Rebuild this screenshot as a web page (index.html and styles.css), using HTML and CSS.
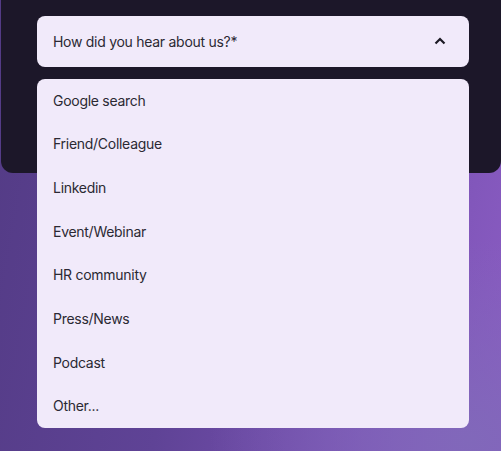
FILE: index.html
```html
<!DOCTYPE html>
<html>
<head>
<meta charset="utf-8">
<link rel="stylesheet" href="styles.css">
</head>
<body>
<div class="page">
  <div class="panel">
    <div class="field">
      <div class="select">
        <span class="label">How did you hear about us?*</span>
        <svg class="chev" width="12" height="8" viewBox="0 0 12 8"><path d="M1.5 6.5 L6 2 L10.5 6.5" fill="none" stroke="#1c1a24" stroke-width="2.2"/></svg>
      </div>
      <ul class="menu">
        <li>Google search</li>
        <li>Friend/Colleague</li>
        <li>Linkedin</li>
        <li>Event/Webinar</li>
        <li>HR community</li>
        <li>Press/News</li>
        <li>Podcast</li>
        <li>Other...</li>
      </ul>
    </div>
  </div>
</div>
</body>
</html>
```
FILE: styles.css
```css
html, body {
  margin: 0;
  padding: 0;
}
body {
  width: 501px;
  height: 451px;
  overflow: hidden;
  font-family: "Inter", "DejaVu Sans", sans-serif;
  background: radial-gradient(ellipse 260px 200px at 470px 440px, #8168ba 0%, rgba(129,104,186,0) 100%),
              linear-gradient(100deg, #533b85 0%, #5f4396 40%, #7a52b4 75%, #8a5cc2 100%);
}
.page {
  padding: 0 0 0 1px;
}
.panel {
  height: 173px;
  background: #1c1729;
  border-radius: 0 0 12px 12px;
  padding: 16px 32px 0 36px;
  box-sizing: border-box;
}
.field {
  position: relative;
}
.select {
  height: 51px;
  box-sizing: border-box;
  background: #f1eafa;
  border-radius: 8px;
  display: flex;
  align-items: center;
  justify-content: space-between;
  padding: 0 23px 1px 16px;
  color: #2b2933;
  font-size: 14px;
  letter-spacing: -0.28px;
}
.chev {
  display: block;
}
.menu {
  position: absolute;
  left: 0;
  right: 0;
  top: 63px;
  margin: 0;
  padding: 0;
  list-style: none;
  background: #f1eafa;
  border-radius: 8px;
  color: #2b2933;
  font-size: 14px;
  letter-spacing: -0.28px;
}
.menu li {
  height: 43.625px;
  box-sizing: border-box;
  display: flex;
  align-items: center;
  padding: 0 16px 1px;
}
```
